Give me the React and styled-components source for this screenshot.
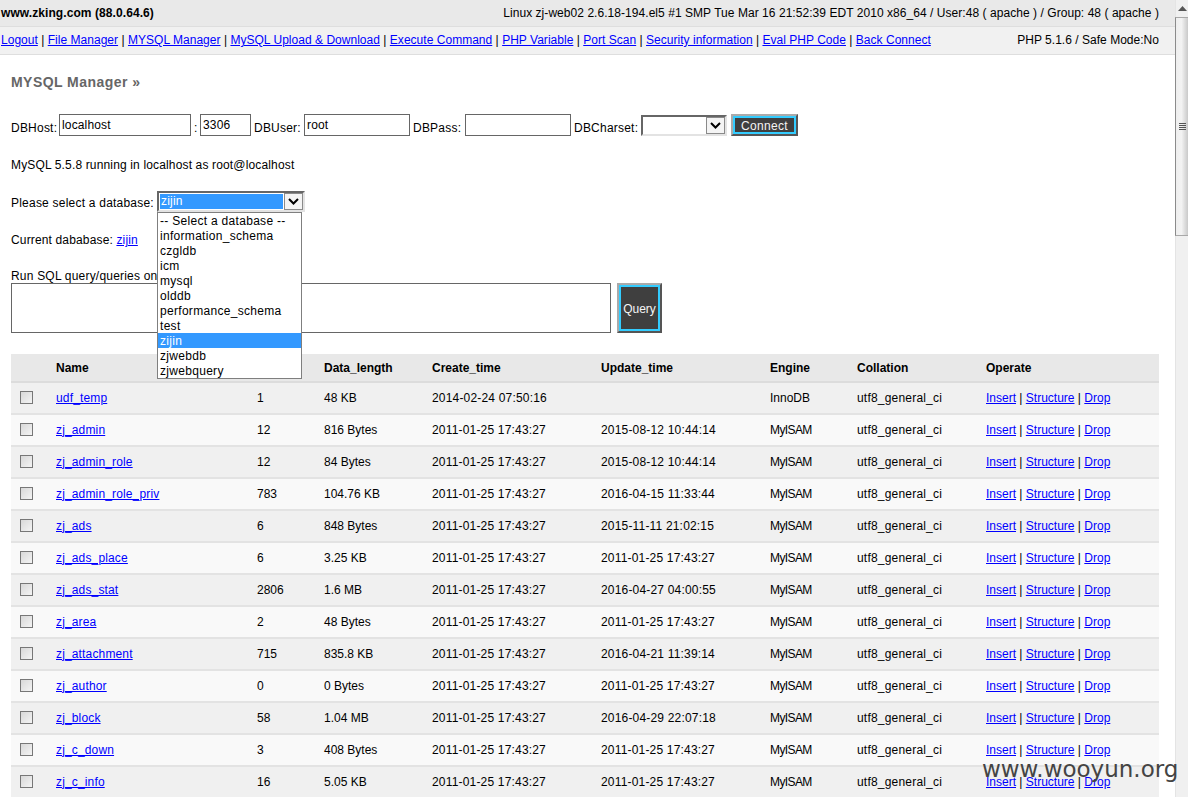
import React from 'react';
import styled, { createGlobalStyle } from 'styled-components';

const GlobalStyle = createGlobalStyle`
  html, body {
    margin: 0;
    height: 100%;
    overflow: hidden;
    background: #fff;
  }
  body {
    font: 12px/15px "Liberation Sans", Arial, sans-serif;
    color: #000;
  }
  a {
    color: #00f;
  }
`;

const Shell = styled.div`
  position: relative;
  display: flex;
  width: 1188px;
  height: 797px;
  overflow: hidden;
`;

const Page = styled.main`
  flex: 1;
  min-width: 0;
`;

const Bar = styled.div`
  display: flex;
  justify-content: space-between;
  align-items: center;
  box-sizing: border-box;
  height: ${p => p.$h}px;
  padding: 0 16px 0 1px;
  background: ${p => p.$bg};
  border-bottom: 1px solid #dedede;
  letter-spacing: ${p => p.$spacing}px;
`;

const Host = styled.b`
  font-weight: bold;
  letter-spacing: 0.08px;
`;

const Content = styled.div`
  padding: 19px 15px 0 11px;
`;

const Title = styled.h2`
  margin: 0;
  font-size: 14px;
  line-height: 16px;
  font-weight: bold;
  letter-spacing: 0.45px;
  color: #666;
`;

const FormRow = styled.div`
  display: flex;
  align-items: flex-start;
  gap: 3px;
  height: 23px;
  margin-top: 24px;
`;

const Label = styled.label`
  flex: 0 0 ${p => p.$w}px;
  min-width: 0;
  margin-top: ${p => p.$top || 7}px;
  letter-spacing: 0.22px;
  white-space: nowrap;
`;

const TextInput = styled.input`
  box-sizing: border-box;
  width: ${p => p.$w}px;
  height: 22px;
  padding: 0 2px;
  border: 1px solid #666;
  background: #fff;
  font: 12px/15px "Liberation Sans", Arial, sans-serif;
  letter-spacing: 0.15px;
  color: #000;
  outline: none;
`;

const Select = styled.div`
  position: relative;
  display: flex;
  box-sizing: border-box;
  width: ${p => p.$w}px;
  height: 21px;
  margin-top: ${p => p.$top || 0}px;
  border: 2px solid;
  border-color: #666 #e3e3e3 #e3e3e3 #666;
`;

const SelectValue = styled.div`
  flex: 1;
  margin: 1px;
  padding-left: 1px;
  line-height: 14px;
  letter-spacing: 0.2px;
  background: ${p => (p.$active ? '#39f' : '#fff')};
  color: ${p => (p.$active ? '#fff' : '#000')};
`;

const SelectArrow = styled.div`
  display: flex;
  align-items: center;
  justify-content: center;
  box-sizing: border-box;
  width: 19px;
  border: 1px solid #8a8a8a;
  background: #f4f4f4;
`;

const Arrow = () => (
  <svg width="11" height="7" viewBox="0 0 11 7">
    <path d="M1 1 L5.5 5.5 L10 1" fill="none" stroke="#000" strokeWidth="2" />
  </svg>
);

const DarkButton = styled.button`
  box-sizing: border-box;
  width: ${p => p.$w}px;
  height: ${p => p.$h}px;
  margin-left: ${p => p.$left || 0}px;
  padding: 2px 0 0;
  border: 2px solid;
  border-color: #aaa #555 #555 #aaa;
  outline: 2px solid #3cf;
  outline-offset: -4px;
  background: #3f3f3f;
  color: #f4f4f4;
  font: 12px/15px "Liberation Sans", Arial, sans-serif;
  letter-spacing: ${p => p.$spacing || 0}px;
`;

const Line = styled.div`
  margin-top: ${p => p.$top}px;
  letter-spacing: ${p => p.$spacing || 0.15}px;
`;

const SelectLine = styled.div`
  display: flex;
  align-items: flex-start;
  gap: 3px;
  height: 21px;
  margin-top: 18px;
`;

const Dropdown = styled.ul`
  position: absolute;
  left: 157px;
  top: 212px;
  z-index: 2;
  box-sizing: border-box;
  width: 145px;
  margin: 0;
  padding: 0;
  list-style: none;
  background: #fff;
  border: 1px solid #7f7f7f;
`;

const Option = styled.li`
  height: 15px;
  padding-left: 2px;
  line-height: 17px;
  letter-spacing: 0.3px;
  background: ${p => (p.$active ? '#39f' : 'transparent')};
  color: ${p => (p.$active ? '#fff' : '#000')};
`;

const QueryRow = styled.div`
  display: flex;
  align-items: flex-start;
  gap: 6px;
  margin-top: -1px;
`;

const QueryBox = styled.textarea`
  box-sizing: border-box;
  width: 600px;
  height: 50px;
  padding: 2px;
  border: 1px solid #666;
  resize: none;
  outline: none;
`;

const Table = styled.table`
  width: 1148px;
  margin-top: 21px;
  border-collapse: collapse;
  table-layout: fixed;
`;

const HeadCell = styled.th`
  box-sizing: border-box;
  height: 28px;
  padding: 2px 0 0;
  text-align: left;
  font-weight: bold;
  background: #e8e8e8;
  border-bottom: 2px solid #dcdcdc;
`;

const Row = styled.tr`
  background: ${p => (p.$odd ? '#f0f0f0' : '#f9f9f9')};
`;

const Cell = styled.td`
  box-sizing: border-box;
  height: 32px;
  padding: 0;
  border-bottom: 2px solid #e3e3e3;
  letter-spacing: ${p => p.$spacing || 0}px;
`;

const CheckCell = styled(Cell)`
  padding: 0 0 2px 9px;
`;

const Check = styled.input`
  display: block;
  appearance: none;
  box-sizing: border-box;
  width: 13px;
  height: 13px;
  margin: 0;
  border: 1px solid #777;
  background: linear-gradient(135deg, #d8d8d8, #f4f4f4);
`;

const ScrollTrack = styled.aside`
  display: flex;
  flex-direction: column;
  box-sizing: border-box;
  flex: 0 0 13px;
  background: #f0f0f0;
  border-left: 1px solid #e4e4e4;
`;

const ScrollButton = styled.div`
  display: flex;
  align-items: center;
  justify-content: center;
  height: 17px;
`;

const ScrollThumb = styled.div`
  display: flex;
  flex-direction: column;
  align-items: center;
  justify-content: center;
  gap: 1px;
  box-sizing: border-box;
  height: 219px;
  margin-left: -1px;
  background: linear-gradient(90deg, #eee, #f3f3f3 45%, #c9c9c9);
  border-left: 1px solid #8b8b8b;
  border-top: 1px solid #a8a8a8;
  border-bottom: 1px solid #a8a8a8;
`;

const Grip = styled.span`
  width: 7px;
  height: 1px;
  background: #555;
`;

const Watermark = styled.div`
  position: absolute;
  left: 982px;
  top: 754px;
  z-index: 3;
  font: 23px/30px "DejaVu Sans", Verdana, sans-serif;
  color: #444;
  white-space: nowrap;
`;

const navLinks = [
  'Logout',
  'File Manager',
  'MYSQL Manager',
  'MySQL Upload & Download',
  'Execute Command',
  'PHP Variable',
  'Port Scan',
  'Security information',
  'Eval PHP Code',
  'Back Connect',
];

const databases = [
  '-- Select a database --',
  'information_schema',
  'czgldb',
  'icm',
  'mysql',
  'olddb',
  'performance_schema',
  'test',
  'zijin',
  'zjwebdb',
  'zjwebquery',
];

const columns = [
  ['', 45],
  ['Name', 201],
  ['Rows', 67],
  ['Data_length', 108],
  ['Create_time', 169],
  ['Update_time', 169],
  ['Engine', 87],
  ['Collation', 129],
  ['Operate', 173],
];

const created = '2011-01-25 17:43:27';

const tables = [
  ['udf_temp', '1', '48 KB', '2014-02-24 07:50:16', '', 'InnoDB'],
  ['zj_admin', '12', '816 Bytes', created, '2015-08-12 10:44:14', 'MyISAM'],
  ['zj_admin_role', '12', '84 Bytes', created, '2015-08-12 10:44:14', 'MyISAM'],
  ['zj_admin_role_priv', '783', '104.76 KB', created, '2016-04-15 11:33:44', 'MyISAM'],
  ['zj_ads', '6', '848 Bytes', created, '2015-11-11 21:02:15', 'MyISAM'],
  ['zj_ads_place', '6', '3.25 KB', created, created, 'MyISAM'],
  ['zj_ads_stat', '2806', '1.6 MB', created, '2016-04-27 04:00:55', 'MyISAM'],
  ['zj_area', '2', '48 Bytes', created, created, 'MyISAM'],
  ['zj_attachment', '715', '835.8 KB', created, '2016-04-21 11:39:14', 'MyISAM'],
  ['zj_author', '0', '0 Bytes', created, created, 'MyISAM'],
  ['zj_block', '58', '1.04 MB', created, '2016-04-29 22:07:18', 'MyISAM'],
  ['zj_c_down', '3', '408 Bytes', created, created, 'MyISAM'],
  ['zj_c_info', '16', '5.05 KB', created, created, 'MyISAM'],
];

const App = () => {
  return (
    <Shell>
      <GlobalStyle />
      <Page>
        <Bar $h={27} $bg="#e9e9e9" $spacing={0.05}>
          <Host>www.zking.com (88.0.64.6)</Host>
          <span>Linux zj-web02 2.6.18-194.el5 #1 SMP Tue Mar 16 21:52:39 EDT 2010 x86_64 / User:48 ( apache ) / Group: 48 ( apache )</span>
        </Bar>
        <Bar $h={28} $bg="#f1f1f1" $spacing={0.025}>
          <span>
            {navLinks.map((label, i) => (
              <React.Fragment key={label}>
                {i > 0 && ' | '}
                <a href="#">{label}</a>
              </React.Fragment>
            ))}
          </span>
          <span>PHP 5.1.6 / Safe Mode:No</span>
        </Bar>
        <Content>
          <Title>MYSQL Manager »</Title>
          <FormRow>
            <Label $w={45}>DBHost:</Label>
            <TextInput $w={132} defaultValue="localhost" />
            <Label $w={3}>:</Label>
            <TextInput $w={51} defaultValue="3306" />
            <Label $w={47}>DBUser:</Label>
            <TextInput $w={106} defaultValue="root" />
            <Label $w={49}>DBPass:</Label>
            <TextInput $w={106} />
            <Label $w={64}>DBCharset:</Label>
            <Select $w={86} $top={1}>
              <SelectValue />
              <SelectArrow><Arrow /></SelectArrow>
            </Select>
            <DarkButton $w={67} $h={22} $left={1} $spacing={0.3}>Connect</DarkButton>
          </FormRow>
          <Line $top={21}>MySQL 5.5.8 running in localhost as root@localhost</Line>
          <SelectLine>
            <Label $w={143} $top={5}>Please select a database:</Label>
            <Select $w={148}>
              <SelectValue $active>zijin</SelectValue>
              <SelectArrow><Arrow /></SelectArrow>
            </Select>
          </SelectLine>
          <Line $top={21}>Current dababase: <a href="#">zijin</a></Line>
          <Line $top={21} $spacing={0.2}>Run SQL query/queries on database:</Line>
          <QueryRow>
            <QueryBox />
            <DarkButton $w={45} $h={50}>Query</DarkButton>
          </QueryRow>
          <Table>
            <colgroup>
              {columns.map(([label, width]) => (
                <col key={label} width={width} />
              ))}
            </colgroup>
            <thead>
              <tr>
                {columns.map(([label]) => (
                  <HeadCell key={label}>{label}</HeadCell>
                ))}
              </tr>
            </thead>
            <tbody>
              {tables.map((t, i) => (
                <Row key={t[0]} $odd={i % 2 === 0}>
                  <CheckCell><Check type="checkbox" /></CheckCell>
                  <Cell $spacing={0.15}><a href="#">{t[0]}</a></Cell>
                  <Cell>{t[1]}</Cell>
                  <Cell>{t[2]}</Cell>
                  <Cell $spacing={0.18}>{t[3]}</Cell>
                  <Cell $spacing={0.18}>{t[4]}</Cell>
                  <Cell $spacing={t[5] === 'MyISAM' ? -0.6 : 0}>{t[5]}</Cell>
                  <Cell $spacing={0.2}>utf8_general_ci</Cell>
                  <Cell>
                    <a href="#">Insert</a> | <a href="#">Structure</a> | <a href="#">Drop</a>
                  </Cell>
                </Row>
              ))}
            </tbody>
          </Table>
        </Content>
      </Page>
      <ScrollTrack>
        <ScrollButton>
          <svg width="9" height="5" viewBox="0 0 9 5">
            <path d="M0 5 L4.5 0 L9 5 Z" fill="#555" />
          </svg>
        </ScrollButton>
        <ScrollThumb>
          <Grip /><Grip /><Grip /><Grip />
        </ScrollThumb>
      </ScrollTrack>
      <Dropdown>
        {databases.map(name => (
          <Option key={name} $active={name === 'zijin'}>{name}</Option>
        ))}
      </Dropdown>
      <Watermark>www.wooyun.org</Watermark>
    </Shell>
  );
};

export default App;
